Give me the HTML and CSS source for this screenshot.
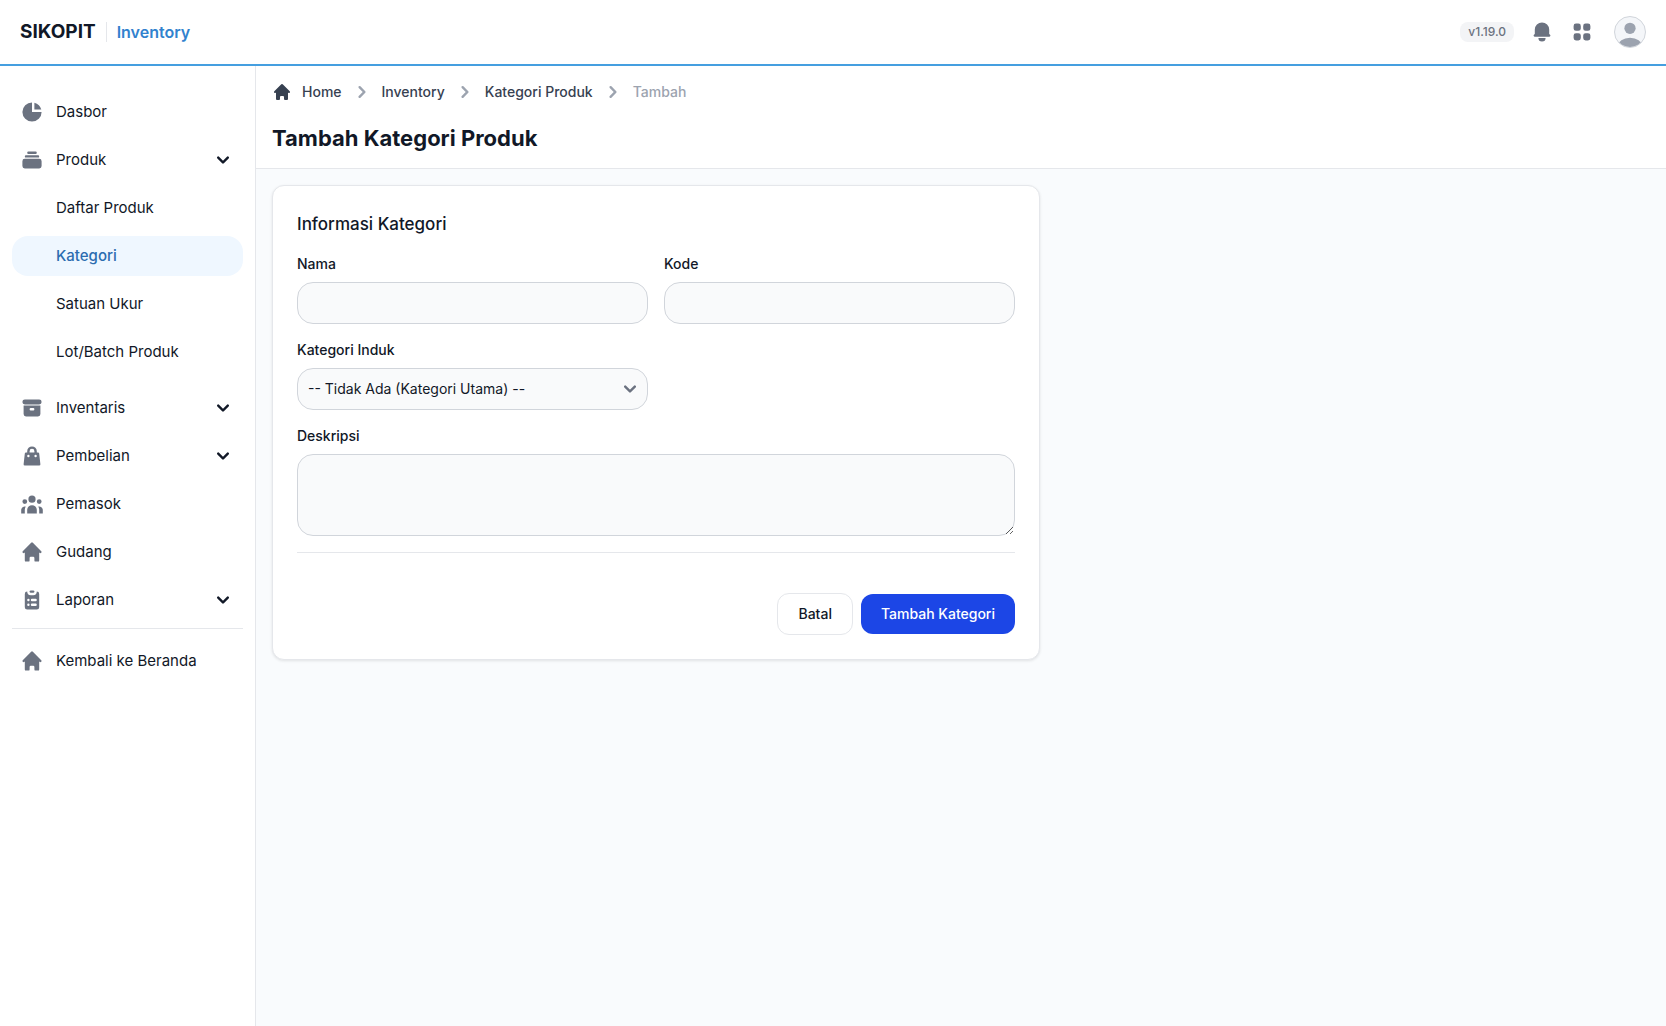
FILE: index.html
```html
<!DOCTYPE html>
<html lang="id">
<head>
  <meta charset="UTF-8" />
  <meta name="viewport" content="width=device-width, initial-scale=1.0"/>
  <title>Tambah Kategori Produk</title>
  <link rel="stylesheet" href="styles.css">
</head>
<body>
  <header class="navbar">
    <div class="brand">
      <a href="#" class="brand-name">SIKOPIT</a>
      <a href="#" class="brand-module">Inventory</a>
    </div>
    <div class="navbar-actions">
      <span class="version">v1.19.0</span>
      <button type="button" class="icon-btn" aria-label="Notifikasi">
        <svg class="icon" viewBox="0 0 20 20"><path d="M10 2a6 6 0 00-6 6v3.586l-.707.707A1 1 0 004 14h12a1 1 0 00.707-1.707L16 11.586V8a6 6 0 00-6-6zM10 18a3 3 0 01-3-3h6a3 3 0 01-3 3z"/></svg>
      </button>
      <button type="button" class="icon-btn" aria-label="Aplikasi">
        <svg class="icon" viewBox="0 0 20 20"><path d="M5 3a2 2 0 00-2 2v2a2 2 0 002 2h2a2 2 0 002-2V5a2 2 0 00-2-2H5zM5 11a2 2 0 00-2 2v2a2 2 0 002 2h2a2 2 0 002-2v-2a2 2 0 00-2-2H5zM11 5a2 2 0 012-2h2a2 2 0 012 2v2a2 2 0 01-2 2h-2a2 2 0 01-2-2V5zM11 13a2 2 0 012-2h2a2 2 0 012 2v2a2 2 0 01-2 2h-2a2 2 0 01-2-2v-2z"/></svg>
      </button>
      <button type="button" class="avatar" aria-label="Profil">
        <svg viewBox="0 0 32 32">
          <circle cx="16" cy="12" r="6"/>
          <ellipse cx="16" cy="32" rx="13" ry="10"/>
        </svg>
      </button>
    </div>
  </header>

  <div class="layout">
    <aside class="sidebar">
      <nav>
        <ul class="menu">
          <li>
            <a href="#" class="menu-item">
              <svg class="icon" viewBox="0 0 20 20"><path d="M2 10a8 8 0 018-8v8h8a8 8 0 11-16 0z"/><path d="M12 2.252A8.014 8.014 0 0117.748 8H12V2.252z"/></svg>
              <span>Dasbor</span>
            </a>
          </li>
          <li>
            <button type="button" class="menu-item" aria-expanded="true">
              <svg class="icon" viewBox="0 0 20 20"><path d="M7 3a1 1 0 000 2h6a1 1 0 100-2H7zM4 7a1 1 0 011-1h10a1 1 0 110 2H5a1 1 0 01-1-1zM2 11a2 2 0 012-2h12a2 2 0 012 2v4a2 2 0 01-2 2H4a2 2 0 01-2-2v-4z"/></svg>
              <span>Produk</span>
              <svg class="icon arrow" viewBox="0 0 20 20"><path d="M5.293 7.293a1 1 0 011.414 0L10 10.586l3.293-3.293a1 1 0 111.414 1.414l-4 4a1 1 0 01-1.414 0l-4-4a1 1 0 010-1.414z"/></svg>
            </button>
            <ul class="submenu">
              <li><a href="#" class="menu-item">Daftar Produk</a></li>
              <li><a href="#" class="menu-item active">Kategori</a></li>
              <li><a href="#" class="menu-item">Satuan Ukur</a></li>
              <li><a href="#" class="menu-item">Lot/Batch Produk</a></li>
            </ul>
          </li>
          <li>
            <button type="button" class="menu-item" aria-expanded="false">
              <svg class="icon" viewBox="0 0 20 20"><path d="M4 3a2 2 0 100 4h12a2 2 0 100-4H4z"/><path fill-rule="evenodd" d="M3 8h14v7a2 2 0 01-2 2H5a2 2 0 01-2-2V8zm5 3a1 1 0 011-1h2a1 1 0 110 2H9a1 1 0 01-1-1z"/></svg>
              <span>Inventaris</span>
              <svg class="icon arrow" viewBox="0 0 20 20"><path d="M5.293 7.293a1 1 0 011.414 0L10 10.586l3.293-3.293a1 1 0 111.414 1.414l-4 4a1 1 0 01-1.414 0l-4-4a1 1 0 010-1.414z"/></svg>
            </button>
          </li>
          <li>
            <button type="button" class="menu-item" aria-expanded="false">
              <svg class="icon" viewBox="0 0 20 20"><path fill-rule="evenodd" d="M10 2a4 4 0 00-4 4v1H5a1 1 0 00-.994.89l-1 9A1 1 0 004 18h12a1 1 0 00.994-1.11l-1-9A1 1 0 0015 7h-1V6a4 4 0 00-4-4zm2 5V6a2 2 0 10-4 0v1h4zm-6 3a1 1 0 112 0 1 1 0 01-2 0zm7-1a1 1 0 100 2 1 1 0 000-2z"/></svg>
              <span>Pembelian</span>
              <svg class="icon arrow" viewBox="0 0 20 20"><path d="M5.293 7.293a1 1 0 011.414 0L10 10.586l3.293-3.293a1 1 0 111.414 1.414l-4 4a1 1 0 01-1.414 0l-4-4a1 1 0 010-1.414z"/></svg>
            </button>
          </li>
          <li>
            <a href="#" class="menu-item">
              <svg class="icon" viewBox="0 0 20 20"><path d="M13 6a3 3 0 11-6 0 3 3 0 016 0zM18 8a2 2 0 11-4 0 2 2 0 014 0zM14 15a4 4 0 00-8 0v3h8v-3zM6 8a2 2 0 11-4 0 2 2 0 014 0zM16 18v-3a5.972 5.972 0 00-.75-2.906A3.005 3.005 0 0119 15v3h-3zM4.75 12.094A5.973 5.973 0 004 15v3H1v-3a3 3 0 013.75-2.906z"/></svg>
              <span>Pemasok</span>
            </a>
          </li>
          <li>
            <a href="#" class="menu-item">
              <svg class="icon" viewBox="0 0 20 20"><path d="M10.707 2.293a1 1 0 00-1.414 0l-7 7a1 1 0 001.414 1.414L4 10.414V17a1 1 0 001 1h2a1 1 0 001-1v-2a1 1 0 011-1h2a1 1 0 011 1v2a1 1 0 001 1h2a1 1 0 001-1v-6.586l.293.293a1 1 0 001.414-1.414l-7-7z"/></svg>
              <span>Gudang</span>
            </a>
          </li>
          <li>
            <button type="button" class="menu-item" aria-expanded="false">
              <svg class="icon" viewBox="0 0 20 20"><path d="M9 2a1 1 0 000 2h2a1 1 0 100-2H9z"/><path fill-rule="evenodd" d="M4 5a2 2 0 012-2 3 3 0 003 3h2a3 3 0 003-3 2 2 0 012 2v11a2 2 0 01-2 2H6a2 2 0 01-2-2V5zm3 4a1 1 0 000 2h.01a1 1 0 100-2H7zm3 0a1 1 0 000 2h3a1 1 0 100-2h-3zm-3 4a1 1 0 100 2h.01a1 1 0 100-2H7zm3 0a1 1 0 100 2h3a1 1 0 100-2h-3z"/></svg>
              <span>Laporan</span>
              <svg class="icon arrow" viewBox="0 0 20 20"><path d="M5.293 7.293a1 1 0 011.414 0L10 10.586l3.293-3.293a1 1 0 111.414 1.414l-4 4a1 1 0 01-1.414 0l-4-4a1 1 0 010-1.414z"/></svg>
            </button>
          </li>
        </ul>
        <div class="menu-back">
          <a href="#" class="menu-item">
            <svg class="icon" viewBox="0 0 20 20"><path d="M10.707 2.293a1 1 0 00-1.414 0l-7 7a1 1 0 001.414 1.414L4 10.414V17a1 1 0 001 1h2a1 1 0 001-1v-2a1 1 0 011-1h2a1 1 0 011 1v2a1 1 0 001 1h2a1 1 0 001-1v-6.586l.293.293a1 1 0 001.414-1.414l-7-7z"/></svg>
            <span>Kembali ke Beranda</span>
          </a>
        </div>
      </nav>
    </aside>

    <main class="content">
      <div class="page-header">
        <nav aria-label="Breadcrumb">
          <ol class="breadcrumb">
            <li>
              <a href="#">
                <svg class="home-icon" viewBox="0 0 20 20"><path d="M10.707 2.293a1 1 0 00-1.414 0l-7 7a1 1 0 001.414 1.414L4 10.414V17a1 1 0 001 1h2a1 1 0 001-1v-2a1 1 0 011-1h2a1 1 0 011 1v2a1 1 0 001 1h2a1 1 0 001-1v-6.586l.293.293a1 1 0 001.414-1.414l-7-7z"/></svg>
                Home
              </a>
            </li>
            <li>
              <svg class="icon separator" viewBox="0 0 20 20"><path d="M7.293 14.707a1 1 0 010-1.414L10.586 10 7.293 6.707a1 1 0 011.414-1.414l4 4a1 1 0 010 1.414l-4 4a1 1 0 01-1.414 0z"/></svg>
              <a href="#">Inventory</a>
            </li>
            <li>
              <svg class="icon separator" viewBox="0 0 20 20"><path d="M7.293 14.707a1 1 0 010-1.414L10.586 10 7.293 6.707a1 1 0 011.414-1.414l4 4a1 1 0 010 1.414l-4 4a1 1 0 01-1.414 0z"/></svg>
              <a href="#">Kategori Produk</a>
            </li>
            <li>
              <svg class="icon separator" viewBox="0 0 20 20"><path d="M7.293 14.707a1 1 0 010-1.414L10.586 10 7.293 6.707a1 1 0 011.414-1.414l4 4a1 1 0 010 1.414l-4 4a1 1 0 01-1.414 0z"/></svg>
              <span class="current" aria-current="page">Tambah</span>
            </li>
          </ol>
        </nav>
        <h1>Tambah Kategori Produk</h1>
      </div>

      <form class="card">
        <h2>Informasi Kategori</h2>
        <div class="form-grid">
          <div class="field">
            <label for="nama">Nama</label>
            <input type="text" id="nama" name="nama">
          </div>
          <div class="field">
            <label for="kode">Kode</label>
            <input type="text" id="kode" name="kode">
          </div>
          <div class="field">
            <label for="induk">Kategori Induk</label>
            <select id="induk" name="induk">
              <option value="">-- Tidak Ada (Kategori Utama) --</option>
            </select>
          </div>
          <div class="field full">
            <label for="deskripsi">Deskripsi</label>
            <textarea id="deskripsi" name="deskripsi" rows="3"></textarea>
          </div>
        </div>
        <div class="form-actions">
          <a href="#" class="btn btn-light">Batal</a>
          <button type="submit" class="btn btn-primary">Tambah Kategori</button>
        </div>
      </form>
    </main>
  </div>
</body>
</html>
```
FILE: styles.css
```css
:root {
  --blue: #1c46e6;
  --sky: #459fe0;
  --gray-50: #f9fafb;
  --gray-100: #f3f4f6;
  --gray-200: #e5e7eb;
  --gray-300: #d1d5db;
  --gray-400: #9ca3af;
  --gray-500: #6b7280;
  --gray-700: #374151;
  --gray-900: #111827;
}

* {
  box-sizing: border-box;
}

body {
  margin: 0;
  min-height: 100vh;
  display: flex;
  flex-direction: column;
  font-family: Inter, "Liberation Sans", sans-serif;
  font-size: 15px;
  line-height: 24px;
  color: var(--gray-900);
  background: #f9fbfd;
}

a {
  color: inherit;
  text-decoration: none;
}

ul, ol {
  list-style: none;
  margin: 0;
  padding: 0;
}

button, input, select, textarea {
  font: inherit;
  color: inherit;
}

.icon {
  width: 24px;
  height: 24px;
  flex-shrink: 0;
  fill: var(--gray-500);
}

/* Navbar */
.navbar {
  display: flex;
  align-items: center;
  justify-content: space-between;
  height: 66px;
  padding: 0 20px;
  background: #fff;
  border-bottom: 2px solid var(--sky);
}

.brand {
  display: flex;
  align-items: center;
}

.brand-name {
  font-size: 19px;
  font-weight: 700;
}

.brand-module {
  margin-left: 10px;
  padding-left: 10px;
  border-left: 1px solid var(--gray-200);
  font-size: 16px;
  line-height: 20px;
  font-weight: 600;
  color: #3182ce;
}

.navbar-actions {
  display: flex;
  align-items: center;
}

.version {
  margin-right: 8px;
  padding: 2px 8px;
  border-radius: 8px;
  background: var(--gray-100);
  font-size: 12px;
  line-height: 16px;
  font-weight: 500;
  color: var(--gray-500);
}

.icon-btn {
  display: flex;
  padding: 8px;
  border: 0;
  background: none;
  cursor: pointer;
}

.avatar {
  width: 32px;
  height: 32px;
  margin-left: 12px;
  padding: 0;
  border: 1px solid var(--gray-300);
  border-radius: 50%;
  background: #f4f6f9;
  overflow: hidden;
  cursor: pointer;
}

.avatar svg {
  display: block;
  width: 100%;
  height: 100%;
  fill: var(--gray-400);
}

/* Sidebar */
.layout {
  display: flex;
  flex: 1;
}

.sidebar {
  width: 256px;
  flex-shrink: 0;
  padding: 26px 12px;
  background: #fff;
  border-right: 1px solid var(--gray-200);
}

.menu, .submenu {
  display: flex;
  flex-direction: column;
  gap: 8px;
}

.submenu {
  padding: 8px 0;
}

.menu-item {
  display: flex;
  align-items: center;
  gap: 12px;
  width: 100%;
  padding: 8px;
  border: 0;
  border-radius: 16px;
  background: none;
  text-align: left;
  cursor: pointer;
}

.menu-item:hover {
  background: var(--gray-100);
}

.submenu .menu-item {
  padding-left: 44px;
}

.submenu .active {
  background: #eff7ff;
  color: #2b6cb0;
  font-weight: 500;
}

.arrow {
  margin-left: auto;
  fill: var(--gray-900);
}

.menu-back {
  margin-top: 8px;
  padding-top: 12px;
  border-top: 1px solid var(--gray-200);
}

/* Content */
.content {
  flex: 1;
  min-width: 0;
}

.page-header {
  padding: 14px 16px;
  background: #fff;
  border-bottom: 1px solid var(--gray-200);
}

.breadcrumb {
  display: flex;
  gap: 8px;
  margin-bottom: 18px;
  font-size: 14px;
  font-weight: 500;
  color: var(--gray-700);
}

.breadcrumb li, .breadcrumb a {
  display: flex;
  align-items: center;
}

.breadcrumb li {
  gap: 8px;
}

.home-icon {
  width: 20px;
  height: 20px;
  margin-right: 10px;
  fill: var(--gray-700);
}

.separator, .current {
  color: var(--gray-400);
  fill: var(--gray-400);
}

h1 {
  margin: 0;
  font-size: 22px;
  line-height: 32px;
  font-weight: 700;
}

.card {
  max-width: 768px;
  margin: 16px;
  padding: 24px;
  background: #fff;
  border: 1px solid var(--gray-200);
  border-radius: 12px;
  box-shadow: 0 1px 3px rgba(0, 0, 0, 0.1);
}

h2 {
  margin: 0 0 16px;
  font-size: 17px;
  line-height: 28px;
  font-weight: 500;
}

.form-grid {
  display: grid;
  grid-template-columns: 1fr 1fr;
  gap: 16px;
  padding-bottom: 16px;
  border-bottom: 1px solid var(--gray-200);
}

.field {
  display: flex;
  flex-direction: column;
  gap: 8px;
  font-size: 14px;
  line-height: 20px;
}

.full {
  grid-column: 1 / -1;
}

.field label {
  font-weight: 500;
}

.field input, .field select, .field textarea {
  width: 100%;
  padding: 10px;
  border: 1px solid var(--gray-300);
  border-radius: 16px;
  background-color: var(--gray-50);
}

.field input, .field select {
  height: 42px;
}

.field select {
  appearance: none;
  background-image: url("data:image/svg+xml,%3Csvg xmlns='http://www.w3.org/2000/svg' fill='none' viewBox='0 0 10 6'%3E%3Cpath stroke='%236b7280' stroke-linecap='round' stroke-linejoin='round' stroke-width='2' d='m1 1 4 4 4-4'/%3E%3C/svg%3E");
  background-repeat: no-repeat;
  background-position: right 11px center;
  background-size: 12px 12px;
}

.field textarea {
  display: block;
  resize: vertical;
}

.form-actions {
  display: flex;
  align-items: center;
  justify-content: flex-end;
  gap: 8px;
  margin-top: 40px;
}

.btn {
  padding: 10px 20px;
  border: 0;
  border-radius: 12px;
  font-size: 14px;
  line-height: 20px;
  font-weight: 500;
  cursor: pointer;
}

.btn-light {
  border: 1px solid var(--gray-200);
  background: #fff;
}

.btn-primary {
  background: var(--blue);
  color: #fff;
}

.btn-primary:hover {
  background: #1a3fc9;
}
```
